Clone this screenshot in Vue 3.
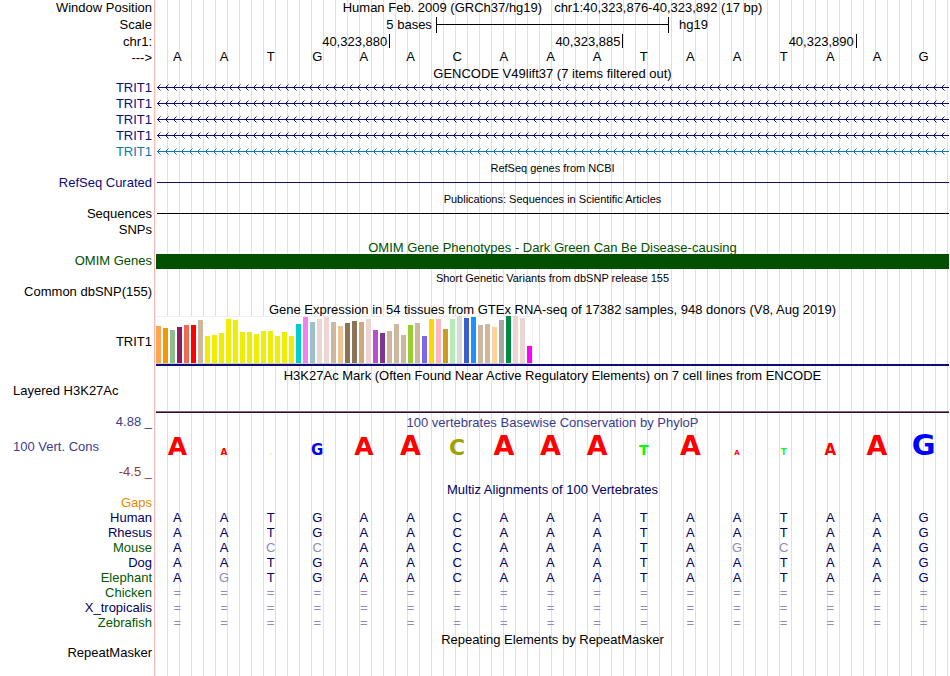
<script setup>
const sequence = "AATGAACAAATAATAAG".split("");

const genes = [
  { id: 1, kind: "coding" },
  { id: 2, kind: "coding" },
  { id: 3, kind: "coding" },
  { id: 4, kind: "coding" },
  { id: 5, kind: "noncoding" },
];

// [colour, height in px] per tissue
const tissues = [
  ["#ffa54f", 37], ["#ee9a00", 35], ["#8fbc8f", 33], ["#8b1c62", 36],
  ["#ee6a50", 38], ["#ff0000", 38], ["#cdb79e", 43], ["#eeee00", 27],
  ["#eeee00", 28], ["#eeee00", 30], ["#eeee00", 44], ["#eeee00", 43],
  ["#eeee00", 31], ["#eeee00", 31], ["#eeee00", 29], ["#eeee00", 32],
  ["#eeee00", 32], ["#eeee00", 27], ["#eeee00", 31], ["#eeee00", 27],
  ["#00cdcd", 39], ["#ee82ee", 46], ["#9ac0cd", 41], ["#eed5d2", 44],
  ["#eed5d2", 46], ["#cdb79e", 41], ["#eec591", 37], ["#8b7355", 40],
  ["#8b7355", 42], ["#cdaa7d", 41], ["#eed5d2", 44], ["#b452cd", 33],
  ["#7a378b", 30], ["#cdb79e", 32], ["#cdb79e", 39], ["#cdb79e", 28],
  ["#9acd32", 38], ["#cdb79e", 40], ["#7a67ee", 27], ["#ffd700", 44],
  ["#ffb6c1", 44], ["#cd9b1d", 34], ["#b4eeb4", 44], ["#d9d9d9", 47],
  ["#3a5fcd", 45], ["#1e90ff", 46], ["#cdb79e", 38], ["#cdb79e", 39],
  ["#ffd39b", 36], ["#a6a6a6", 43], ["#008b45", 47], ["#eed5d2", 47],
  ["#eed5d2", 45], ["#ff00ff", 17],
];

// font size of each letter follows its conservation score
const logoSizes = [25, 9, 2, 15, 25, 27, 22, 27, 27, 27, 14, 27, 7, 8, 15, 27, 29];

const alignments = [
  { name: "Human", clade: "navy", bases: "AATGAACAAATAATAAG" },
  { name: "Rhesus", clade: "navy", bases: "AATGAACAAATAATAAG" },
  { name: "Mouse", clade: "green", bases: "AACCAACAAATAGCAAG" },
  { name: "Dog", clade: "navy", bases: "AATGAACAAATAATAAG" },
  { name: "Elephant", clade: "green", bases: "AGTGAACAAATAATAAG" },
  { name: "Chicken", clade: "green", bases: "=================" },
  { name: "X_tropicalis", clade: "navy", bases: "=================" },
  { name: "Zebrafish", clade: "green", bases: "=================" },
];
</script>

<template>
  <main class="browser">
    <div class="row h16">
      <div class="label">Window Position</div>
      <div class="title position">
        <span>Human Feb. 2009 (GRCh37/hg19)</span>
        <span>chr1:40,323,876-40,323,892 (17 bp)</span>
      </div>
    </div>
    <div class="row h18">
      <div class="label">Scale</div>
      <div class="scale">
        <span class="scale-size">5 bases</span>
        <span class="scale-bar"></span>
        <span class="scale-db">hg19</span>
      </div>
    </div>
    <div class="row h16">
      <div class="label">chr1:</div>
      <div class="ruler">
        <span class="tick">40,323,880</span>
        <span class="tick">40,323,885</span>
        <span class="tick">40,323,890</span>
      </div>
    </div>
    <div class="row h16">
      <div class="label">---&gt;</div>
      <div class="bases sequence">
        <span v-for="(base, i) in sequence" :key="i">{{ base }}</span>
      </div>
    </div>

    <div class="row h14">
      <div class="title">GENCODE V49lift37 (7 items filtered out)</div>
    </div>
    <div v-for="gene in genes" :key="gene.id" class="row h16" :class="gene.kind">
      <div class="label">TRIT1</div>
      <svg class="strand" aria-hidden="true">
        <defs>
          <pattern
            :id="`arrows-${gene.id}`"
            width="8"
            height="16"
            patternUnits="userSpaceOnUse"
          >
            <path
              d="M1 7h1v1h-1zM2 6h1v1h-1zM2 8h1v1h-1zM3 5h1v1h-1zM3 9h1v1h-1z"
              fill="currentColor"
            />
            <path
              d="M4 4h1v1h-1zM4 10h1v1h-1z"
              fill="currentColor"
              fill-opacity="0.5"
            />
          </pattern>
        </defs>
        <rect width="100%" height="16" :fill="`url(#arrows-${gene.id})`" />
        <rect x="1" y="7" width="100%" height="1" fill="currentColor" />
      </svg>
    </div>

    <div class="row h15">
      <div class="title small">RefSeq genes from NCBI</div>
    </div>
    <div class="row h16 refseq">
      <div class="label">RefSeq Curated</div>
      <div class="line"></div>
    </div>
    <div class="row h15">
      <div class="title small">Publications: Sequences in Scientific Articles</div>
    </div>
    <div class="row h16">
      <div class="label">Sequences</div>
      <div class="line"></div>
    </div>
    <div class="row h16">
      <div class="label">SNPs</div>
    </div>

    <div class="row h15 omim">
      <div class="title low">OMIM Gene Phenotypes - Dark Green Can Be Disease-causing</div>
    </div>
    <div class="row h15 omim">
      <div class="label">OMIM Genes</div>
      <div class="block"></div>
    </div>
    <div class="row h16">
      <div class="title small low">Short Genetic Variants from dbSNP release 155</div>
    </div>
    <div class="row h16">
      <div class="label">Common dbSNP(155)</div>
    </div>

    <div class="row h16">
      <div class="title low">
        Gene Expression in 54 tissues from GTEx RNA-seq of 17382 samples, 948 donors (V8, Aug 2019)
      </div>
    </div>
    <div class="row h50">
      <div class="label low">TRIT1</div>
      <div class="expression">
        <div class="chart">
          <span
            v-for="([color, height], i) in tissues"
            :key="i"
            class="bar"
            :style="{ height: `${height}px`, background: color }"
          ></span>
        </div>
      </div>
    </div>

    <div class="row h18">
      <div class="title low">
        H3K27Ac Mark (Often Found Near Active Regulatory Elements) on 7 cell lines from ENCODE
      </div>
    </div>
    <div class="row h29">
      <div class="label track-name layered">Layered H3K27Ac</div>
      <div class="signal"></div>
    </div>

    <div class="row h18 phylop">
      <div class="label">4.88 _</div>
      <div class="title low">100 vertebrates Basewise Conservation by PhyloP</div>
    </div>
    <div class="row h32 phylop">
      <div class="label track-name">100 Vert. Cons</div>
      <div class="bases logo">
        <span
          v-for="(base, i) in sequence"
          :key="i"
          :class="`base-${base}`"
          :style="{ fontSize: `${logoSizes[i]}px` }"
        >{{ base }}</span>
      </div>
    </div>
    <div class="row h17 lower">
      <div class="label">-4.5 _</div>
    </div>

    <div class="row h15 navy">
      <div class="title low">Multiz Alignments of 100 Vertebrates</div>
    </div>
    <div class="row h15 gaps">
      <div class="label">Gaps</div>
    </div>
    <table class="alignment">
      <tbody>
        <tr v-for="species in alignments" :key="species.name">
          <th scope="row" :class="species.clade">{{ species.name }}</th>
          <td
            v-for="(base, i) in species.bases"
            :key="i"
            :class="{ differs: base !== sequence[i] }"
          >
            {{ base }}
          </td>
        </tr>
      </tbody>
    </table>

    <div class="row h15">
      <div class="title low">Repeating Elements by RepeatMasker</div>
    </div>
    <div class="row h15">
      <div class="label">RepeatMasker</div>
    </div>
  </main>
</template>

<style>
body {
  margin: 0;
  background: #fff;
}
</style>

<style scoped>
.browser {
  box-sizing: border-box;
  min-height: 100vh;
  padding-right: 1px;
  font-family: "Liberation Sans", Arial, Helvetica, sans-serif;
  font-size: 13px;
  line-height: 16px;
  color: #000;
  background:
    linear-gradient(#ffb4b4, #ffb4b4) 154px 0 / 1px 100% no-repeat,
    linear-gradient(#fff, #fff) 0 0 / 156px 100% no-repeat,
    repeating-linear-gradient(to right, transparent 0 11px, #dcdcff 11px 12px) 156px 0 no-repeat;
}

.row {
  display: grid;
  grid-template-columns: 152px minmax(0, 1fr);
  column-gap: 4px;
  align-items: center;
}

.h14 { height: 14px; }
.h15 { height: 15px; }
.h16 { height: 16px; }
.h17 { height: 17px; }
.h18 { height: 18px; }
.h29 { height: 29px; }
.h32 { height: 32px; }
.h50 { height: 50px; }

.label {
  grid-column: 1;
  text-align: right;
  white-space: nowrap;
}

.track-name {
  padding-left: 13px;
  text-align: left;
}

.layered {
  align-self: start;
  line-height: 14px;
}

.title {
  grid-column: 2;
  text-align: center;
  white-space: nowrap;
}

.small {
  font-size: 11px;
}

.low {
  padding-top: 2px;
}

.position {
  display: flex;
  justify-content: center;
  gap: 12px;
  line-height: 14px;
}

.scale {
  display: grid;
  grid-template-columns: 6fr 5fr 6fr;
}

.scale-size {
  padding-right: 4px;
  text-align: right;
}

.scale-bar {
  border: solid #000;
  border-width: 0 1px;
  background: linear-gradient(#000, #000) 0 7px / 100% 1px no-repeat;
}

.scale-db {
  padding-left: 10px;
}

.ruler {
  display: grid;
  grid-template-columns: 5fr 5fr 5fr 2fr;
  align-self: start;
}

.tick {
  height: 14px;
  margin-right: -1px;
  padding-right: 2px;
  border-right: 1px solid #000;
  text-align: right;
}

.bases {
  display: grid;
  grid-template-columns: repeat(17, minmax(0, 1fr));
  margin: 0 2px 0 -2px;
  text-align: center;
}

.sequence {
  align-self: start;
  line-height: 14px;
}

.strand {
  display: block;
  width: 100%;
  height: 16px;
}

.coding {
  color: #0c0c78;
}

.noncoding {
  color: #0c78b4;
}

.line {
  align-self: start;
  height: 1px;
  margin: 7px 0 0 1px;
  background: currentColor;
}

.refseq {
  color: #0c0c78;
}

.omim {
  color: #005000;
}

.block {
  height: 15px;
  background: currentColor;
}

.expression {
  box-sizing: border-box;
  height: 50px;
  border-bottom: 2px solid #0c0c78;
}

.chart {
  display: flex;
  align-items: flex-end;
  gap: 2px;
  width: max-content;
  height: 47px;
  border-bottom: 1px solid #ccc;
  background: #fff;
  box-shadow: inset 0 1px #f0f0f0, 1px 0 #f0f0f0;
}

.bar {
  width: 5px;
}

.signal {
  align-self: end;
  height: 1px;
  border-top: 1px solid #806a80;
  background: #300830;
}

.phylop {
  color: #3c3c8c;
}

.lower {
  color: #8c3c3c;
}

.logo {
  align-self: start;
  align-items: baseline;
  font-family: "DejaVu Sans", Verdana, sans-serif;
  font-weight: bold;
  line-height: 1;
}

.base-A {
  color: #f00;
}

.base-C {
  color: #a0a000;
}

.base-G {
  color: #00f;
}

.base-T {
  color: #0f0;
}

.navy {
  color: #000064;
}

.green {
  color: #005a00;
}

.gaps {
  color: #e68a00;
}

.alignment {
  width: calc(100% - 2px);
  table-layout: fixed;
  border-collapse: collapse;
  line-height: 15px;
  color: #000064;
}

.alignment th {
  width: 152px;
  padding: 0 2px 0 0;
  font-weight: normal;
  text-align: right;
}

.alignment td {
  padding: 0;
  text-align: center;
}

.alignment .differs {
  color: #8c8cb4;
}
</style>
